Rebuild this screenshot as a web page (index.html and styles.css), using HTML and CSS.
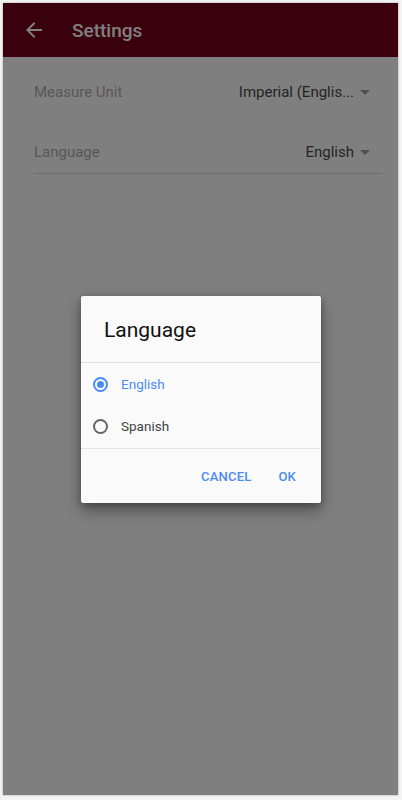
FILE: index.html
```html
<!DOCTYPE html>
<html>
<head>
<meta charset="utf-8">
<link rel="stylesheet" href="styles.css">
</head>
<body>
<div class="device">
  <header class="appbar">
    <svg class="back" width="24" height="24" viewBox="0 0 24 24"><path d="M20 11H7.83l5.59-5.59L12 4l-8 8 8 8 1.41-1.41L7.83 13H20v-2z" fill="#fff"/></svg>
    <span class="title">Settings</span>
  </header>
  <main class="settings">
    <div class="row">
      <span class="label">Measure Unit</span>
      <span class="value">Imperial (Englis... <span class="caret"></span></span>
    </div>
    <div class="row last">
      <span class="label">Language</span>
      <span class="value">English <span class="caret"></span></span>
    </div>
  </main>
  <div class="overlay">
    <div class="dialog">
      <div class="dtitle">Language</div>
      <div class="options">
        <div class="option selected"><span class="radio"></span><span>English</span></div>
        <div class="option"><span class="radio"></span><span>Spanish</span></div>
      </div>
      <div class="actions">
        <span class="btn">CANCEL</span>
        <span class="btn">OK</span>
      </div>
    </div>
  </div>
</div>
</body>
</html>
```
FILE: styles.css
```css
html, body { margin: 0; padding: 0; }
body {
  background: #f3f3f3;
  font-family: Roboto, "Noto Sans", sans-serif;
  width: 402px;
  height: 800px;
  overflow: hidden;
}
.device {
  position: relative;
  margin: 3px 0 0 3px;
  width: 395px;
  height: 792px;
  background: #fff;
  box-shadow: 0 0 2px rgba(0,0,0,0.35);
  overflow: hidden;
}
.appbar {
  height: 54px;
  background: #76001a;
  display: flex;
  align-items: center;
  padding-left: 19px;
}
.back { margin-right: 26px; }
.title {
  color: #fff;
  font-size: 19px;
  font-weight: 500;
}
.settings {
  padding: 5px 16px 0 31px;
}
.row {
  height: 60px;
  display: flex;
  align-items: center;
  justify-content: space-between;
  font-size: 15px;
  line-height: 18px;
}
.row.last {
  box-sizing: border-box;
  height: 52px;
  align-items: flex-start;
  padding-top: 21px;
  border-bottom: 1px solid #d9d9d9;
}
.label { color: #b0b0b0; }
.value { color: #4a4a4a; display: flex; align-items: center; padding-right: 12px; }
.caret {
  width: 0; height: 0;
  border-left: 5px solid transparent;
  border-right: 5px solid transparent;
  border-top: 5px solid #9e9e9e;
  margin-left: 6px;
}
.overlay {
  position: absolute;
  inset: 0;
  background: rgba(0,0,0,0.5);
}
.dialog {
  position: absolute;
  left: 78px;
  top: 293px;
  width: 240px;
  background: #fafafa;
  border-radius: 2px;
  box-shadow: 0 8px 16px rgba(0,0,0,0.35), 0 2px 6px rgba(0,0,0,0.25);
}
.dtitle {
  height: 67px;
  box-sizing: border-box;
  padding: 22px 0 0 23px;
  font-size: 21px;
  color: #111;
  border-bottom: 1px solid #dcdcdc;
}
.options {
  padding: 0 0 1px;
  border-bottom: 1px solid #e4e4e4;
}
.option {
  height: 42px;
  display: flex;
  align-items: center;
  padding-left: 12px;
  font-size: 13.5px;
  color: #444;
}
.option.selected { color: #4c8bf5; }
.radio {
  box-sizing: border-box;
  width: 15px; height: 15px;
  border: 2px solid #666;
  border-radius: 50%;
  margin-right: 13px;
  display: flex;
  align-items: center;
  justify-content: center;
}
.selected .radio { border-color: #4c8bf5; }
.selected .radio::after {
  content: "";
  width: 7px; height: 7px;
  border-radius: 50%;
  background: #4c8bf5;
}
.actions {
  height: 54px;
  display: flex;
  align-items: center;
  justify-content: flex-end;
  padding-right: 25px;
  gap: 27px;
}
.btn {
  color: #4c8bf5;
  font-size: 13px;
  font-weight: 500;
  letter-spacing: 0.2px;
}
```
